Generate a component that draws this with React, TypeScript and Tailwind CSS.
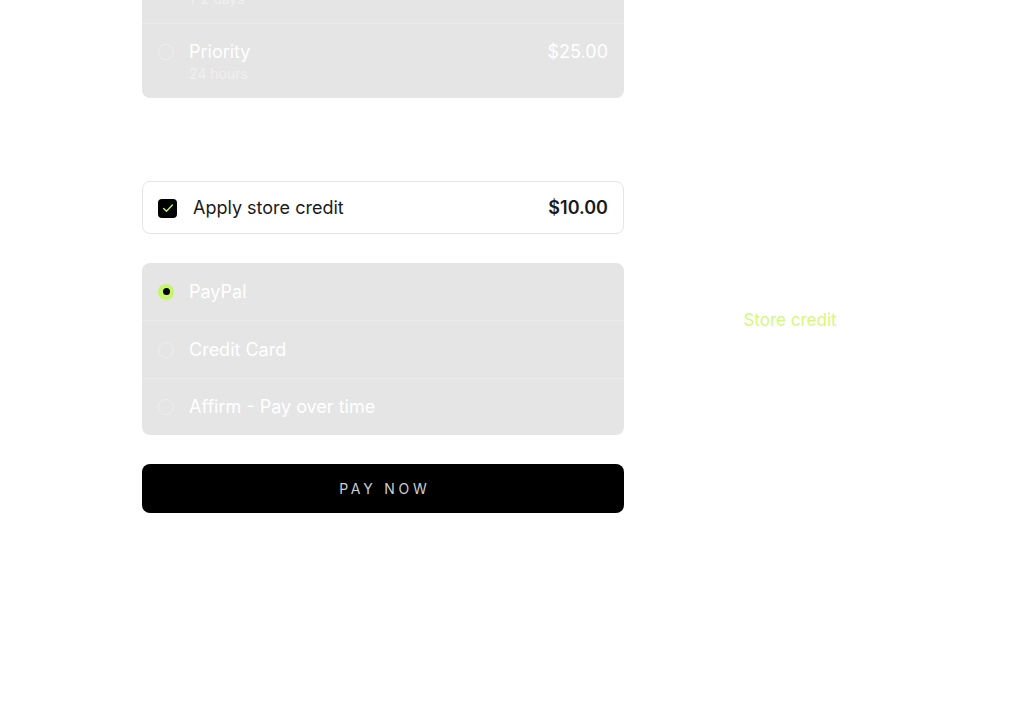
import React from "react";

function Radio({ checked }: { checked?: boolean }) {
  if (checked) {
    return (
      <span className="flex h-4 w-4 shrink-0 items-center justify-center rounded-full bg-[#c5f56a]">
        <span className="block h-[7px] w-[7px] rounded-full bg-black" />
      </span>
    );
  }
  return <span className="block h-4 w-4 shrink-0 rounded-full border border-[#efefef]" />;
}

function ShipRow({ name, time, price, first }: { name: string; time: string; price: string; first?: boolean }) {
  return (
    <div className={first ? "flex items-start gap-[15px] px-4 pt-4 pb-[14px]" : "flex items-start gap-[15px] border-t border-[#ebebeb] px-4 pt-4 pb-[14px]"}>
      <div className="flex h-6 items-center">
        <Radio />
      </div>
      <div className="flex flex-1 flex-col">
        <span className="text-lg leading-6 text-white">{name}</span>
        <span className="text-sm leading-5 text-[#f0f0f0]">{time}</span>
      </div>
      <span className="text-lg leading-6 text-white">{price}</span>
    </div>
  );
}

export default function App() {
  const font = { fontFamily: "Inter, 'Noto Sans', sans-serif" };
  return (
    <div className="min-h-[716px] w-full overflow-hidden bg-white" style={font}>
      <div className="flex">
        <div className="ml-[142px] mt-[-51px] flex w-[482px] flex-col">
          <div className="overflow-hidden rounded-lg bg-[#e5e5e5]">
            <ShipRow name="Express" time="1-2 days" price="$15.00" first />
            <ShipRow name="Priority" time="24 hours" price="$25.00" />
          </div>

          <label className="mt-[83px] flex h-[53px] items-center rounded-lg border border-[#e5e5e5] bg-white px-[15px] pt-[1px]">
            <span className="flex h-[19px] w-[19px] shrink-0 items-center justify-center rounded-[4px] bg-black">
              <svg viewBox="0 0 16 16" className="h-[14px] w-[14px]" fill="none" stroke="#c5f56a" strokeWidth="1.5" strokeLinecap="round" strokeLinejoin="round">
                <path d="M3 8.5l3.2 3.2L13 4.5" />
              </svg>
            </span>
            <span className="ml-4 flex-1 text-lg text-[#1a1a1a]">Apply store credit</span>
            <span className="text-lg font-semibold text-[#1a1a1a]">$10.00</span>
          </label>

          <div className="mt-[29px] overflow-hidden rounded-lg bg-[#e5e5e5]">
            <div className="flex h-[57px] items-center gap-[15px] px-4">
              <Radio checked />
              <span className="text-lg text-white">PayPal</span>
            </div>
            <div className="flex h-[58px] items-center gap-[15px] border-t border-[#ebebeb] px-4">
              <Radio />
              <span className="text-lg text-white">Credit Card</span>
            </div>
            <div className="flex h-[57px] items-center gap-[15px] border-t border-[#ebebeb] px-4">
              <Radio />
              <span className="text-lg text-white">Affirm - Pay over time</span>
            </div>
          </div>

          <button className="mt-[29px] flex h-[49px] items-center justify-center rounded-lg bg-black pl-[0.27em] text-sm tracking-[0.27em] text-[#cfcfcf]">
            PAY NOW
          </button>
        </div>

        <div className="ml-[32px] flex w-[268px] flex-col items-center pt-[310px]">
          <span className="text-[17px] leading-5 text-[#d4f87c]">Store credit</span>
        </div>
      </div>
    </div>
  );
}
